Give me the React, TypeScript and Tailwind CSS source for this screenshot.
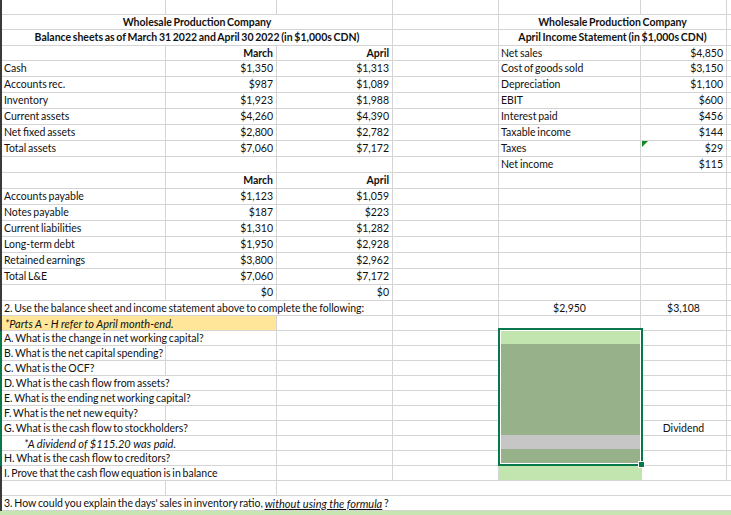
const font = "font-['Lato','Liberation_Sans',sans-serif]";

type Cell = { t?: React.ReactNode; span?: number; cls?: string; line?: boolean };

// columns: A B C D E F G
const Row = ({ h, cells, bar = "bg-[#3a3a3a]" }: { h: string; cells: Cell[]; bar?: string }) => (
  <div className={`grid grid-cols-[2px_164px_111px_116px_106px_142px_86px_4px] ${h}`}>
    <div className={bar} />
    {cells.map((c, i) => (
      <div
        key={i}
        style={{ gridColumn: `span ${c.span ?? 1}` }}
        className={`flex items-center pl-[2px] pr-[2px] whitespace-pre min-w-0 border-b border-[#d4d4d4] ${c.line === false ? "" : "border-r"} ${c.cls ?? ""}`}
      >
        {c.t}
      </div>
    ))}
    <div className="border-b border-[#d4d4d4]" />
  </div>
);

const num = (t: string) => ({ t, cls: "justify-end pr-[3px]" });
const bold = (t: string) => ({ t, cls: "justify-end pr-[3px] font-bold" });

const blanks = (n: number) => Array.from({ length: n }, () => ({} as Cell));

const sheetRows: [string, string, string, string, string][] = [
  ["Cash", "$1,350", "$1,313", "Cost of goods sold", "$3,150"],
  ["Accounts rec.", "$987", "$1,089", "Depreciation", "$1,100"],
  ["Inventory", "$1,923", "$1,988", "EBIT", "$600"],
  ["Current assets", "$4,260", "$4,390", "Interest paid", "$456"],
  ["Net fixed assets", "$2,800", "$2,782", "Taxable income", "$144"],
  ["Total assets", "$7,060", "$7,172", "Taxes", "$29"],
];

const liabilities: [string, string, string][] = [
  ["Accounts payable", "$1,123", "$1,059"],
  ["Notes payable", "$187", "$223"],
  ["Current liabilities", "$1,310", "$1,282"],
  ["Long-term debt", "$1,950", "$2,928"],
  ["Retained earnings", "$3,800", "$2,962"],
  ["Total L&E", "$7,060", "$7,172"],
];

const GREEN = "bg-[#08784a]";

export default function App() {
  return (
    <div className={`relative w-[731px] h-[515px] overflow-hidden bg-white text-[10.5px] leading-none text-[#111111] [word-spacing:-0.9px] ${font}`}>
      <Row h="h-[15px]" cells={blanks(6)} />
      <Row h="h-[15px]" cells={[{ t: "Wholesale Production Company", span: 3, cls: "justify-center font-bold" }, {}, { t: "Wholesale Production Company", span: 2, cls: "justify-center font-bold" }]} />
      <Row h="h-[16px]" cells={[{ t: "Balance sheets as of March 31 2022 and April 30 2022 (in $1,000s CDN)", span: 3, cls: "justify-center font-bold" }, {}, { t: "April Income Statement (in $1,000s CDN)", span: 2, cls: "justify-center font-bold" }]} />
      <Row h="h-[15px]" cells={[{}, bold("March"), bold("April"), {}, { t: "Net sales" }, num("$4,850")]} />
      {sheetRows.map((r) => (
        <Row key={r[0]} h="h-[16px]" cells={[{ t: r[0] }, num(r[1]), num(r[2]), {}, { t: r[3] }, num(r[4])]} />
      ))}
      <Row h="h-[16px]" cells={[{}, {}, {}, {}, { t: "Net income" }, num("$115")]} />
      <Row h="h-[16px]" cells={[{}, bold("March"), bold("April"), ...blanks(3)]} />
      {liabilities.map((r) => (
        <Row key={r[0]} h="h-[16px]" cells={[{ t: r[0] }, num(r[1]), num(r[2]), ...blanks(3)]} />
      ))}
      <Row h="h-[16px]" cells={[{}, num("$0"), num("$0"), ...blanks(3)]} />
      <Row h="h-[15px]" cells={[{ t: "2. Use the balance sheet and income statement above to complete the following:", span: 3 }, {}, { t: "$2,950", cls: "justify-center" }, { t: "$3,108", cls: "justify-center" }]} />
      <Row h="h-[15px]" cells={[{ t: "*Parts A - H refer to April month-end.", span: 2, cls: "italic text-[11px] [word-spacing:0px] bg-[#ffe699] pl-[3px]" }, ...blanks(4)]} />
      <Row bar={GREEN} h="h-[15px]" cells={[{ t: "A. What is the change in net working capital?", span: 2 }, ...blanks(4)]} />
      <Row bar={GREEN} h="h-[15px]" cells={[{ t: "B. What is the net capital spending?" }, ...blanks(5)]} />
      <Row bar={GREEN} h="h-[15px]" cells={[{ t: "C. What is the OCF?" }, ...blanks(5)]} />
      <Row bar={GREEN} h="h-[15px]" cells={[{ t: "D. What is the cash flow from assets?", span: 2 }, ...blanks(4)]} />
      <Row bar={GREEN} h="h-[15px]" cells={[{ t: "E. What is the ending net working capital?", span: 2 }, ...blanks(4)]} />
      <Row bar={GREEN} h="h-[15px]" cells={[{ t: "F. What is the net new equity?" }, ...blanks(5)]} />
      <Row bar={GREEN} h="h-[15px]" cells={[{ t: "G. What is the cash flow to stockholders?", span: 2 }, {}, {}, {}, { t: "Dividend", cls: "justify-center" }]} />
      <Row bar={GREEN} h="h-[15px]" cells={[{ t: "*A dividend of $115.20 was paid.", span: 2, cls: "italic text-[11px] [word-spacing:0px] pl-[22px]" }, ...blanks(4)]} />
      <Row bar={GREEN} h="h-[15px]" cells={[{ t: "H. What is the cash flow to creditors?", span: 2 }, ...blanks(4)]} />
      <Row h="h-[15px]" cells={[{ t: "I. Prove that the cash flow equation is in balance", span: 2 }, ...blanks(4)]} />
      <Row h="h-[15px]" cells={[{}, {}, { span: 4, line: false }]} />
      <Row
        h="h-[15px]"
        cells={[
          {
            t: (
              <>
                3. How could you explain the days' sales in inventory ratio, <span className="italic underline text-[11px] [word-spacing:0px]">without using the formula</span> ?
              </>
            ),
            span: 6,
            line: false,
          },
        ]}
      />
      <div className="h-[6px] bg-[#c6e5b0]" />

      {/* green comment marker on the Taxes cell */}
      <svg className="absolute left-[642px] top-[141px]" width="6" height="6" viewBox="0 0 6 6">
        <path d="M0 0H6L0 6Z" fill="#0f8a1f" />
      </svg>

      {/* selected range */}
      <div className="absolute left-[498px] top-[328px] w-[145px] h-[138px] border-[2px] border-[#08784a] flex flex-col">
        <div className="flex-1 border border-white flex flex-col">
          <div className="h-[13px] bg-[#c2e4ae]" />
          <div className="h-[91px] bg-[#97b18a]" />
          <div className="h-[14px] bg-[#c6c6c6]" />
          <div className="flex-1 bg-[#97b18a]" />
        </div>
      </div>
      <div className="absolute left-[499px] top-[466px] w-[143px] h-[14px] bg-[#c2e4ae]" />
      <div className="absolute left-[638px] top-[461px] w-[7px] h-[7px] bg-[#08784a] border border-white" />
    </div>
  );
}
